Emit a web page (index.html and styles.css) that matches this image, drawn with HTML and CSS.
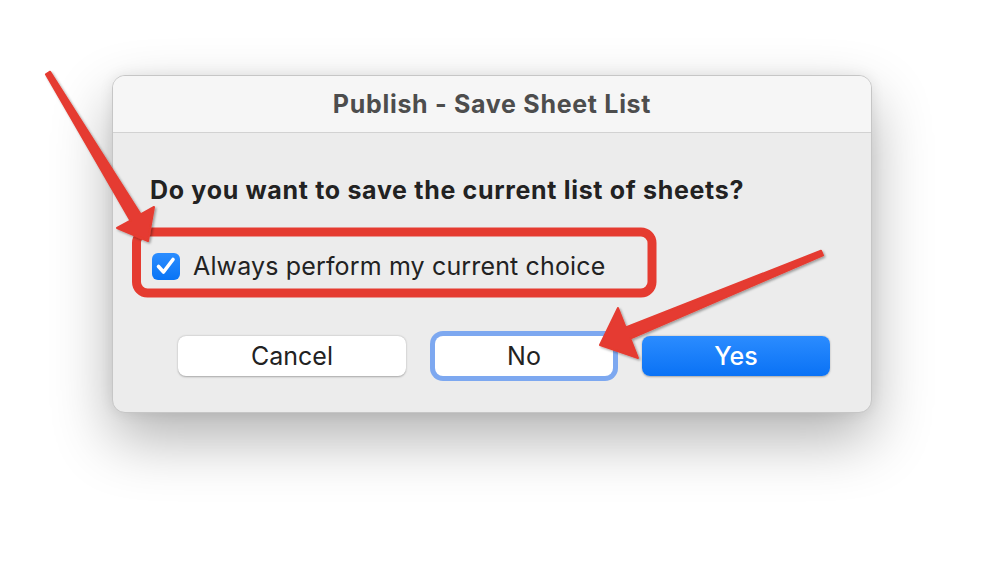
FILE: index.html
```html
<!DOCTYPE html>
<html lang="en">
<head>
    <meta charset="UTF-8">
    <title>Publish - Save Sheet List</title>
    <link rel="stylesheet" href="styles.css">
</head>
<body>
    <div class="dialog">
        <div class="titlebar">Publish - Save Sheet List</div>
        <div class="content">
            <p class="question">Do you want to save the current list of sheets?</p>
            <label class="option">
                <span class="checkbox">
                    <svg width="22" height="20" viewBox="0 0 22 20"><path d="M3.5 10.5 L8.5 16 L18 3.5" fill="none" stroke="#fff" stroke-width="3.6" stroke-linecap="round" stroke-linejoin="round"/></svg>
                </span>
                Always perform my current choice
            </label>
            <div class="buttons">
                <button class="btn">Cancel</button>
                <button class="btn focused">No</button>
                <button class="btn primary">Yes</button>
            </div>
        </div>
    </div>

    <!-- annotation layer -->
    <svg class="annotations" width="984" height="562" viewBox="0 0 984 562">
        <defs>
            <filter id="shade" x="-20%" y="-20%" width="140%" height="140%">
                <feDropShadow dx="1.5" dy="1.5" stdDeviation="1" flood-color="#000" flood-opacity="0.35"/>
            </filter>
        </defs>
        <rect x="136.5" y="232" width="515.5" height="61" rx="11" fill="none" stroke="#e53b30" stroke-width="9"/>
        <g fill="#e53b30" stroke="#e53b30" stroke-width="2" stroke-linejoin="round" filter="url(#shade)">
            <polygon points="50.1,71.7 140.6,214.4 154,207 148,241 117,228 130.4,220.6 45.9,74.3"/>
            <polygon points="821,250.7 625.7,327.5 618,308 600,345 638,358 630.3,338.5 823,255.3"/>
        </g>
    </svg>
</body>
</html>
```

FILE: styles.css
```css
body {
    margin: 0;
    background: #fff;
    font-family: Inter, "Noto Sans", sans-serif;
    width: 984px;
    height: 562px;
    overflow: hidden;
    position: relative;
}
.dialog {
    margin: 75px 0 0 112px;
    width: 760px;
    height: 338px;
    box-sizing: border-box;
    border: 1px solid #c6c6c6;
    border-radius: 13px;
    background: #ececec;
    overflow: hidden;
    box-shadow: 0 26px 60px rgba(0,0,0,0.3), 0 0 14px rgba(0,0,0,0.08);
}
.titlebar {
    height: 56px;
    background: #f6f6f6;
    border-bottom: 1px solid #d2d2d2;
    display: flex;
    align-items: center;
    justify-content: center;
    font-size: 25px;
    font-weight: 700;
    letter-spacing: 0.7px;
    color: #4d4d4d;
}
.content {
    padding: 0 0 0 37px;
}
.question {
    margin: 42px 0 0;
    line-height: 30px;
    font-size: 25px;
    font-weight: 700;
    letter-spacing: 0.68px;
    color: #222;
}
.option {
    display: flex;
    align-items: center;
    gap: 13px;
    height: 28px;
    margin: 47px 0 0 2px;
    font-size: 25px;
    letter-spacing: 0.15px;
    color: #222;
}
.checkbox {
    width: 28px;
    height: 27px;
    border-radius: 6px;
    background: linear-gradient(#2b8dff, #0874f5);
    display: flex;
    align-items: center;
    justify-content: center;
}
.buttons {
    display: flex;
    align-items: center;
    margin: 56px 0 0 28px;
}
.btn {
    font-family: inherit;
    font-size: 25px;
    color: #222;
    background: #fff;
    border: none;
    border-radius: 8px;
    height: 40px;
    padding: 0;
    box-shadow: 0 0.5px 2px rgba(0,0,0,0.3);
}
.btn:nth-child(1) {
    width: 228px;
}
.btn.focused {
    width: 178px;
    margin-left: 29px;
    box-shadow: 0 0 0 5px #7da8f0;
}
.btn.primary {
    width: 188px;
    margin-left: 29px;
    color: #fff;
    font-weight: 500;
    background: linear-gradient(#2b8cff, #0a72f5);
}
.annotations {
    position: absolute;
    left: 0;
    top: 0;
}
```
